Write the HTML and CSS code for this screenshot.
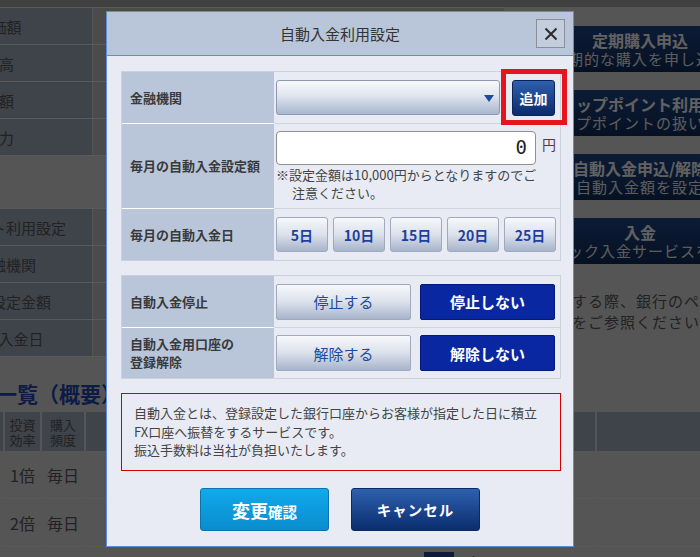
FILE: index.html
```html
<!DOCTYPE html>
<html lang="ja">
<head>
    <meta charset="UTF-8">
    <meta name="viewport" content="width=device-width, initial-scale=1.0">
    <title>自動入金利用設定</title>
    <link rel="stylesheet" href="styles.css">
</head>
<body>
    <!-- page behind the dialog -->
    <div class="page">
        <div class="topbar"></div>
        <div class="upper">
            <div class="left">
                <div class="info-table">
                    <div class="info-row"><div class="info-label">評価額</div><div class="info-value"></div></div>
                    <div class="info-row"><div class="info-label">残高</div><div class="info-value"></div></div>
                    <div class="info-row"><div class="info-label">金額</div><div class="info-value"></div></div>
                    <div class="info-row"><div class="info-label">余力</div><div class="info-value"></div></div>
                </div>
                <div class="info-table second">
                    <div class="info-row"><div class="info-label">ポイント利用設定</div><div class="info-value"></div></div>
                    <div class="info-row"><div class="info-label">金融機関</div><div class="info-value"></div></div>
                    <div class="info-row"><div class="info-label">入金設定金額</div><div class="info-value"></div></div>
                    <div class="info-row"><div class="info-label">自動入金日</div><div class="info-value"></div></div>
                </div>
            </div>
            <div class="right">
                <div class="nav-btn"><strong>定期購入申込</strong><span>定期的な購入を申し込む</span></div>
                <div class="nav-btn"><strong>ストップポイント利用設定</strong><span>ストップポイントの扱いを設定</span></div>
                <div class="nav-btn"><strong>自動入金申込/解除</strong><span>月の自動入金額を設定する</span></div>
                <div class="nav-btn"><strong>入金</strong><span>クイック入金サービスを利用</span></div>
                <p class="right-note">入金する際、銀行のページ<br>手順をご参照ください。</p>
            </div>
        </div>

        <h2 class="list-title">積立一覧（概要）</h2>
        <div class="list">
            <div class="list-head"></div>
            <div class="list-head">投資<br>効率</div>
            <div class="list-head">購入<br>頻度</div>
            <div class="list-head"></div>
            <div class="list-head"></div>

            <div class="list-cell"></div>
            <div class="list-cell">1倍</div>
            <div class="list-cell">毎日</div>
            <div class="list-cell"></div>
            <div class="list-cell"></div>

            <div class="list-cell"></div>
            <div class="list-cell">2倍</div>
            <div class="list-cell">毎日</div>
            <div class="list-cell"></div>
            <div class="list-cell"></div>

            <div class="list-cell"></div>
            <div class="list-cell"></div>
            <div class="list-cell"></div>
            <div class="list-cell currency"><span class="flag"></span>豪ドル</div>
            <div class="list-cell"></div>
        </div>
    </div>

    <div class="overlay"></div>

    <!-- dialog -->
    <div class="modal">
        <div class="modal-header">
            <h1 class="modal-title">自動入金利用設定</h1>
            <button class="close-btn" type="button">
                <svg width="14" height="14" viewBox="0 0 14 14"><path d="M1.5 1.5 L12.5 12.5 M12.5 1.5 L1.5 12.5" stroke="#2b2b2b" stroke-width="2" fill="none"/></svg>
            </button>
        </div>

        <div class="modal-body">
            <div class="form-table">
                <div class="form-row row-bank">
                    <div class="form-label">金融機関</div>
                    <div class="form-cell">
                        <div class="select-box"><span class="select-arrow"></span></div>
                        <div class="add-wrap">
                            <button class="add-btn" type="button">追加</button>
                            <span class="highlight"></span>
                        </div>
                    </div>
                </div>
                <div class="form-row row-amount">
                    <div class="form-label">毎月の自動入金設定額</div>
                    <div class="form-cell stacked">
                        <div class="amount-line">
                            <div class="amount-input">0</div>
                            <span class="yen">円</span>
                        </div>
                        <p class="amount-note">※設定金額は10,000円からとなりますのでご<br>注意ください。</p>
                    </div>
                </div>
                <div class="form-row row-day">
                    <div class="form-label">毎月の自動入金日</div>
                    <div class="form-cell days">
                        <button class="day-btn" type="button">5日</button>
                        <button class="day-btn" type="button">10日</button>
                        <button class="day-btn" type="button">15日</button>
                        <button class="day-btn" type="button">20日</button>
                        <button class="day-btn" type="button">25日</button>
                    </div>
                </div>
            </div>

            <div class="form-table">
                <div class="form-row row-choice">
                    <div class="form-label">自動入金停止</div>
                    <div class="form-cell choices">
                        <button class="choice-btn" type="button">停止する</button>
                        <button class="choice-btn active" type="button">停止しない</button>
                    </div>
                </div>
                <div class="form-row row-choice">
                    <div class="form-label">自動入金用口座の<br>登録解除</div>
                    <div class="form-cell choices">
                        <button class="choice-btn" type="button">解除する</button>
                        <button class="choice-btn active" type="button">解除しない</button>
                    </div>
                </div>
            </div>

            <div class="notice">
                自動入金とは、登録設定した銀行口座からお客様が指定した日に積立<br>
                FX口座へ振替をするサービスです。<br>
                振込手数料は当社が負担いたします。
            </div>

            <div class="actions">
                <button class="confirm-btn" type="button">変更<small>確認</small></button>
                <button class="cancel-btn" type="button">キャンセル</button>
            </div>
        </div>
    </div>
</body>
</html>
```

FILE: styles.css
```css
body {
    margin: 0;
    overflow: hidden;
    background: #d4d4d4;
    font-family: "Noto Sans CJK JP", "Noto Sans", sans-serif;
    color: #555;
}

/* background page */
.page {
    width: 872px;
    margin-left: -96px;
}
.topbar {
    height: 7px;
    background: #a0a0a0;
}
.upper {
    display: grid;
    grid-template-columns: 600px 272px;
}
.info-table {
    border-top: 1px solid #e2e2e2;
}
.info-table.second {
    margin-top: 52px;
}
.info-row {
    display: grid;
    grid-template-columns: 188px 1fr;
    gap: 1px;
    height: 36px;
    border-bottom: 1px solid #e2e2e2;
}
.info-label {
    background: #9ea8b9;
    display: flex;
    align-items: center;
    justify-content: center;
    white-space: nowrap;
    font-size: 15px;
    padding-left: 2px;
}
.second .info-label {
    padding-left: 16px;
}
.info-value {
    background: #bcbcbc;
}
.right {
    padding-top: 19px;
    display: flex;
    flex-direction: column;
    gap: 18px;
    overflow: hidden;
}
.nav-btn {
    height: 46px;
    background: linear-gradient(#1f4686, #0f2a58);
    color: #f2f2f2;
    display: flex;
    flex-direction: column;
    align-items: center;
    justify-content: center;
    white-space: nowrap;
}
.nav-btn strong {
    font-size: 16px;
    line-height: 19px;
}
.nav-btn span {
    font-size: 15px;
    line-height: 18px;
    color: #e6e6e6;
    letter-spacing: 1px;
}
.right-note {
    margin: 8px 0 0 36px;
    font-size: 15px;
    line-height: 21px;
    letter-spacing: 1px;
    white-space: nowrap;
}
.list-title {
    margin: 0 0 5px;
    padding: 22px 0 0 50px;
    font-size: 21px;
    line-height: 28px;
    color: #2348ac;
}
.list {
    display: grid;
    grid-template-columns: 99px 35px 42px 509px 1fr;
    column-gap: 2px;
}
.list-head {
    height: 39px;
    background: #9ea8b9;
    font-size: 13px;
    line-height: 15px;
    display: flex;
    align-items: center;
    justify-content: center;
    text-align: center;
}
.list-cell {
    height: 47px;
    border-bottom: 1px solid #e2e2e2;
    display: flex;
    align-items: center;
    justify-content: center;
    font-size: 16px;
}
.list-cell.currency {
    justify-content: flex-start;
    align-items: flex-start;
    padding: 5px 0 0 338px;
    font-size: 15px;
    gap: 12px;
}
.flag {
    width: 30px;
    height: 18px;
    background: #2a3f8f;
}

.overlay {
    position: fixed;
    inset: 0;
    background: rgba(0, 0, 0, 0.6);
}

/* dialog */
.modal {
    position: fixed;
    left: 106px;
    top: 11px;
    width: 468px;
    height: 536px;
    box-sizing: border-box;
    border: 1px solid #5b8ee0;
    background: #e8ebf4;
    color: #333;
}
.modal-header {
    height: 43px;
    background: #b9c6da;
    border-bottom: 1px solid #5b8ee0;
    display: flex;
    align-items: center;
    justify-content: center;
    position: relative;
}
.modal-title {
    margin: 0;
    font-size: 15px;
    font-weight: normal;
    color: #333;
}
.close-btn {
    position: absolute;
    right: 8px;
    top: 7px;
    width: 29px;
    height: 29px;
    padding: 0;
    border: 1px solid #8a8f98;
    background: #c2cddd;
    display: flex;
    align-items: center;
    justify-content: center;
}
.modal-body {
    padding: 15px 12px 0 14px;
}
.form-table {
    border: 1px solid #cbd2de;
    margin-bottom: 14px;
}
.form-row {
    display: grid;
    grid-template-columns: 152px 1fr;
}
.form-row + .form-row .form-label {
    border-top: 1px solid #fff;
}
.form-row + .form-row .form-cell {
    border-top: 1px solid #cfd5e0;
}
.form-label {
    background: #b9c6da;
    padding-left: 8px;
    display: flex;
    align-items: center;
    font-size: 13px;
    font-weight: bold;
    line-height: 18px;
    color: #3a3a3a;
}
.form-cell {
    padding: 0 3px 0 2px;
    display: flex;
    align-items: center;
}
.row-bank { height: 51px; }
.row-amount { height: 85px; }
.row-day { height: 52px; }
.row-choice { height: 51px; }

.select-box {
    width: 224px;
    height: 35px;
    box-sizing: border-box;
    border: 1px solid #8d99b0;
    border-radius: 3px;
    background: linear-gradient(#f8f9fc, #dfe4ee 45%, #a8b6cf);
    position: relative;
}
.select-arrow {
    position: absolute;
    right: 5px;
    top: 14px;
    border-left: 5px solid transparent;
    border-right: 5px solid transparent;
    border-top: 7px solid #1b4a9e;
}
.add-wrap {
    position: relative;
    margin-left: 12px;
}
.add-btn {
    width: 43px;
    height: 36px;
    padding: 0;
    border: 1px solid #0a2258;
    border-radius: 3px;
    background: linear-gradient(#2f5fae, #0b2b6c);
    color: #fff;
    font-family: inherit;
    font-size: 14px;
    font-weight: bold;
    display: block;
}
.highlight {
    position: absolute;
    left: -11px;
    top: -11px;
    width: 66px;
    height: 56px;
    box-sizing: border-box;
    border: 5px solid #e5141d;
}

.form-cell.stacked {
    flex-direction: column;
    align-items: flex-start;
    padding-top: 7px;
}
.amount-line {
    display: flex;
    align-items: center;
}
.amount-input {
    width: 260px;
    height: 34px;
    box-sizing: border-box;
    border: 1px solid #8f8f8f;
    border-radius: 4px;
    background: #fff;
    text-align: right;
    padding-right: 8px;
    font-family: "DejaVu Sans Mono", monospace;
    font-size: 19px;
    line-height: 30px;
    color: #222;
}
.yen {
    margin-left: 6px;
    font-size: 14px;
    color: #5a3a44;
    align-self: flex-start;
    margin-top: 3px;
}
.amount-note {
    margin: 1px 0 0;
    padding-left: 16px;
    text-indent: -16px;
    font-size: 13px;
    line-height: 18px;
    color: #444;
    white-space: nowrap;
}

.form-cell.days {
    gap: 5px;
}
.day-btn {
    width: 52px;
    height: 35px;
    padding: 0;
    border: 1px solid #a0aabb;
    border-radius: 3px;
    background: linear-gradient(#f6f8fb, #dbe1eb 50%, #a7b4cc);
    color: #1d3f9e;
    font-family: inherit;
    font-size: 14px;
    font-weight: bold;
}

.form-cell.choices {
    gap: 9px;
}
.choice-btn {
    width: 135px;
    height: 36px;
    padding: 0;
    border: 1px solid #a0aabb;
    border-radius: 2px;
    background: linear-gradient(#f6f8fb, #dbe1eb 50%, #a7b4cc);
    color: #1e4a9b;
    font-family: inherit;
    font-size: 15px;
}
.choice-btn.active {
    background: #0a27a2;
    border-color: #06187a;
    color: #fff;
    font-weight: bold;
}

.notice {
    height: 78px;
    box-sizing: border-box;
    border: 1px solid #d40000;
    padding: 10px 0 0 12px;
    font-size: 13px;
    line-height: 18.5px;
    color: #444;
    white-space: nowrap;
}

.actions {
    margin-top: 17px;
    display: flex;
    justify-content: center;
    gap: 22px;
    padding-right: 2px;
}
.confirm-btn,
.cancel-btn {
    width: 129px;
    height: 43px;
    padding: 0;
    border-radius: 3px;
    color: #fff;
    font-family: inherit;
    font-weight: bold;
}
.confirm-btn {
    border: 1px solid #0b74ad;
    background: linear-gradient(#10aaec, #0a8ccd);
    font-size: 18px;
}
.confirm-btn small {
    font-size: 14.5px;
}
.cancel-btn {
    border: 1px solid #0a2a66;
    background: linear-gradient(#2e60ae, #0b2d6e);
    font-size: 14.5px;
    letter-spacing: 1px;
}
```
